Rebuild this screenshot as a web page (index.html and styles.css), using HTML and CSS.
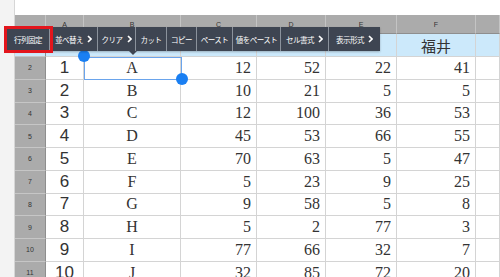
FILE: index.html
```html
<!DOCTYPE html>
<html>
<head>
<meta charset="UTF-8">
<title>Sheet</title>
<link rel="stylesheet" href="styles.css">
</head>
<body>
<div class="page">
  <div class="side"></div>
  <div class="main">
    <div class="top"></div>
    <div class="sheet">
      <div class="ch corner"></div>
      <div class="ch">A</div>
      <div class="ch">B</div>
      <div class="ch">C</div>
      <div class="ch">D</div>
      <div class="ch">E</div>
      <div class="ch">F</div>
      <div class="ch"></div>

      <div class="rh hl"></div>
      <div class="c hl"></div>
      <div class="c hl"></div>
      <div class="c hl"></div>
      <div class="c hl"></div>
      <div class="c hl"></div>
      <div class="c hl jp">福井</div>
      <div class="c hl"></div>

      <div class="rh">2</div><div class="c no">1</div><div class="c ch-l">A</div><div class="c n">12</div><div class="c n">52</div><div class="c n">22</div><div class="c n">41</div><div class="c"></div>
      <div class="rh">3</div><div class="c no">2</div><div class="c ch-l">B</div><div class="c n">10</div><div class="c n">21</div><div class="c n">5</div><div class="c n">5</div><div class="c"></div>
      <div class="rh">4</div><div class="c no">3</div><div class="c ch-l">C</div><div class="c n">12</div><div class="c n">100</div><div class="c n">36</div><div class="c n">53</div><div class="c"></div>
      <div class="rh">5</div><div class="c no">4</div><div class="c ch-l">D</div><div class="c n">45</div><div class="c n">53</div><div class="c n">66</div><div class="c n">55</div><div class="c"></div>
      <div class="rh">6</div><div class="c no">5</div><div class="c ch-l">E</div><div class="c n">70</div><div class="c n">63</div><div class="c n">5</div><div class="c n">47</div><div class="c"></div>
      <div class="rh">7</div><div class="c no">6</div><div class="c ch-l">F</div><div class="c n">5</div><div class="c n">23</div><div class="c n">9</div><div class="c n">25</div><div class="c"></div>
      <div class="rh">8</div><div class="c no">7</div><div class="c ch-l">G</div><div class="c n">9</div><div class="c n">58</div><div class="c n">5</div><div class="c n">8</div><div class="c"></div>
      <div class="rh">9</div><div class="c no">8</div><div class="c ch-l">H</div><div class="c n">5</div><div class="c n">2</div><div class="c n">77</div><div class="c n">3</div><div class="c"></div>
      <div class="rh">10</div><div class="c no">9</div><div class="c ch-l">I</div><div class="c n">77</div><div class="c n">66</div><div class="c n">32</div><div class="c n">7</div><div class="c"></div>
      <div class="rh">11</div><div class="c no">10</div><div class="c ch-l">J</div><div class="c n">32</div><div class="c n">85</div><div class="c n">72</div><div class="c n">20</div><div class="c"></div>
    </div>
  </div>

  <!-- selected cell B2 -->
  <div class="sel"></div>
  <div class="knob k1"></div>
  <div class="knob k2"></div>

  <!-- context toolbar -->
  <div class="toolbar">
    <div class="btn w43">行列固定</div>
    <div class="btn w48">並べ替え<svg class="arr" viewBox="0 0 5 8"><path d="M1 1 L4 4 L1 7" /></svg></div>
    <div class="btn w38">クリア<svg class="arr" viewBox="0 0 5 8"><path d="M1 1 L4 4 L1 7" /></svg></div>
    <div class="btn w31">カット</div>
    <div class="btn w30">コピー</div>
    <div class="btn w36">ペースト</div>
    <div class="btn w48">値をペースト</div>
    <div class="btn w48">セル書式<svg class="arr" viewBox="0 0 5 8"><path d="M1 1 L4 4 L1 7" /></svg></div>
    <div class="btn w51 last">表示形式<svg class="arr" viewBox="0 0 5 8"><path d="M1 1 L4 4 L1 7" /></svg></div>
  </div>
  <div class="pointer"></div>
  <div class="mark"></div>
</div>
</body>
</html>
```

FILE: styles.css
```css
* {
    margin: 0;
    padding: 0;
    box-sizing: border-box;
}
body {
    background: #fff;
    width: 500px;
    height: 277px;
    overflow: hidden;
    color: #333;
}
.page {
    position: relative;
    display: flex;
    height: 277px;
    overflow: hidden;
}
.side {
    width: 15px;
    flex-shrink: 0;
    background: #f3f3f3;
    border-right: 1px solid #d6d6d6;
}
.main {
    flex: 1;
    display: flex;
    flex-direction: column;
}
.top {
    height: 15px;
    flex-shrink: 0;
    background: #fff;
}
.sheet {
    flex-shrink: 0;
    display: grid;
    grid-template-columns: 31px 38px 97px 76px 69px 71px 79px 1fr;
    grid-template-rows: 19px 23px repeat(10, 22.75px);
}
.ch {
    background: #ababab;
    border-right: 1px solid #c4c4c4;
    border-bottom: 1px solid #8e8e8e;
    font-family: "Liberation Sans", sans-serif;
    font-size: 7px;
    color: #333;
    display: flex;
    justify-content: center;
    align-items: center;
}
.rh {
    background: #ababab;
    border-bottom: 1px solid #c6c6c6;
    border-right: 1px solid #8e8e8e;
    font-family: "Liberation Sans", sans-serif;
    font-size: 7px;
    color: #333;
    display: flex;
    justify-content: center;
    align-items: center;
}
.c {
    border-right: 1px solid #d4d4d4;
    border-bottom: 1px solid #d4d4d4;
    display: flex;
    align-items: center;
    justify-content: center;
    background: #fff;
}
.hl {
    background: #cce9fb;
}
.jp {
    font-family: "Noto Sans CJK JP", sans-serif;
    font-size: 15px;
    color: #333;
}
.no {
    font-family: "Liberation Sans", sans-serif;
    font-size: 17px;
}
.ch-l {
    font-family: "Liberation Serif", serif;
    font-size: 16px;
}
.n {
    justify-content: flex-end;
    padding-right: 5px;
    font-family: "Liberation Serif", serif;
    font-size: 16px;
}

/* selection */
.sel {
    position: absolute;
    left: 84px;
    top: 57px;
    width: 98px;
    height: 23px;
    border: 1.5px solid #6aa4ec;
}
.knob {
    position: absolute;
    width: 12px;
    height: 12px;
    border-radius: 50%;
    background: #1a7ff2;
}
.k1 {
    left: 78px;
    top: 50px;
}
.k2 {
    left: 176px;
    top: 73px;
}

/* toolbar */
.toolbar {
    position: absolute;
    left: 7px;
    top: 27px;
    height: 24px;
    display: flex;
    background: #3e4552;
    box-shadow: 0 1px 2px rgba(0,0,0,0.25);
}
.btn {
    height: 24px;
    border-right: 1px solid #8b929c;
    color: #fff;
    font-family: "Noto Sans CJK JP", sans-serif;
    font-size: 7.5px;
    display: flex;
    align-items: center;
    justify-content: center;
    white-space: nowrap;
    letter-spacing: -0.5px;
}
.btn.last {
    border-right: none;
}
.arr {
    width: 5px;
    height: 8px;
    margin-left: 4px;
    fill: none;
    stroke: #fff;
    stroke-width: 1.6;
}
.w43 { width: 43px; }
.w48 { width: 48px; }
.w38 { width: 38px; }
.w31 { width: 31px; }
.w30 { width: 30px; }
.w36 { width: 36px; }
.w51 { width: 51px; }
.pointer {
    position: absolute;
    left: 129px;
    top: 51px;
    width: 0;
    height: 0;
    border-left: 4px solid transparent;
    border-right: 4px solid transparent;
    border-top: 4px solid #3e4552;
}
.mark {
    position: absolute;
    left: 4px;
    top: 26px;
    width: 49px;
    height: 27px;
    border: 3px solid #e3151c;
}
```
